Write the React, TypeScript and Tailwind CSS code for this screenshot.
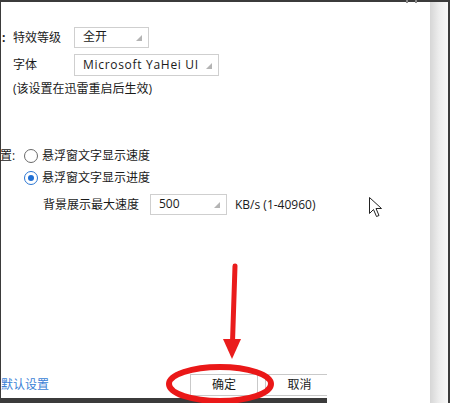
import React from "react";

const font = { fontFamily: '"Open Sans", "Noto Sans CJK SC", sans-serif' };

function Tri() {
  return (
    <svg width="6" height="6" viewBox="0 0 6 6" className="shrink-0">
      <polygon points="6,0 6,6 0,6" fill="#b4b4b4" />
    </svg>
  );
}

function Select({ value, w, h, wide }: { value: string; w: string; h: string; wide?: boolean }) {
  return (
    <div
      className={`${w} ${h} border border-[#cfcfcf] bg-white flex items-center justify-between pl-[8px] pr-[6px] pb-[1px]`}
    >
      <span className={wide ? "leading-[16px] text-[12px] text-[#1a1a1a] tracking-[0.7px]" : "leading-[16px] text-[12px] text-[#1a1a1a]"}>{value}</span>
      <div className="self-end mb-[5px]">
        <Tri />
      </div>
    </div>
  );
}

function Radio({ checked }: { checked?: boolean }) {
  return checked ? (
    <div className="w-[14px] h-[14px] rounded-full border border-[#2b76d2] bg-white flex items-center justify-center shrink-0">
      <div className="w-[6px] h-[6px] rounded-full bg-[#1f6fd4]" />
    </div>
  ) : (
    <div className="w-[14px] h-[14px] rounded-full border border-[#6a6a6a] bg-white shrink-0" />
  );
}

export default function App() {
  return (
    <div
      className="relative w-[450px] h-[403px] bg-[#3b3b3b] pt-[2px] flex overflow-hidden text-[12px] text-[#1a1a1a]"
      style={font}
    >
      <div className="w-[1px] shrink-0" />
      {/* main white panel */}
      <div className="w-[429px] h-[401px] bg-white flex flex-col">
        {/* row 1 */}
        <div className="mt-[25px] flex items-center h-[21px]">
          <span className="w-[12px] pl-[1px] font-bold leading-[16px]">:</span>
          <span className="w-[61px] leading-[16px]">特效等级</span>
          <Select value="全开" w="w-[75px]" h="h-[21px]" />
        </div>
        {/* row 2 */}
        <div className="mt-[6px] flex items-center h-[22px] pl-[12px]">
          <span className="w-[61px] leading-[16px]">字体</span>
          <Select value="Microsoft YaHei UI" w="w-[145px]" h="h-[22px]" wide />
        </div>
        {/* row 3 */}
        <div className="mt-[5px] pl-[12px] leading-[16px]">(该设置在迅雷重启后生效)</div>
        {/* radio 1 */}
        <div className="mt-[51px] flex items-center h-[16px]">
          <span className="w-[24px] -ml-[1px] leading-[16px]">置:</span>
          <Radio />
          <span className="ml-[4px] leading-[16px]">悬浮窗文字显示速度</span>
        </div>
        {/* radio 2 */}
        <div className="mt-[6px] flex items-center h-[16px] pl-[23px]">
          <Radio checked />
          <span className="ml-[4px] leading-[16px]">悬浮窗文字显示进度</span>
        </div>
        {/* speed */}
        <div className="mt-[8px] flex items-center h-[21px] pl-[42px]">
          <span className="w-[107px] leading-[16px]">背景展示最大速度</span>
          <Select value="500" w="w-[77px]" h="h-[21px]" />
          <span className="ml-[8px] leading-[16px]">KB/s (1-40960)</span>
        </div>
        <div className="flex-1" />
        {/* footer */}
        <div className="flex items-center h-[22px]">
          <span className="w-[189px] text-[#3a7fd6] leading-[16px]">默认设置</span>
          <div className="flex h-[22px] border-y border-[#c9c9c9]">
            <div className="w-[68px] border-x border-[#c9c9c9] flex items-center justify-center leading-[16px]">
              确定
            </div>
            <div className="w-[7px]" />
            <div className="w-[62px] border-l border-[#c9c9c9] flex items-center justify-center leading-[16px]">
              <span className="ml-[6px]">取消</span>
            </div>
          </div>
        </div>
        <div className="mt-[2px] flex">
          <div className="w-[326px] h-[5px] bg-[#3b3b3b]" />
        </div>
      </div>
      {/* right gradient strip */}
      <div className="w-[18px] h-[401px] bg-gradient-to-r from-[#d6d6d6] via-[#ededed] to-[#f8f8f8]" />

      {/* overlays */}
      <svg
        className="absolute inset-0 pointer-events-none"
        width="450"
        height="403"
        viewBox="0 0 450 403"
      >
        <rect x="406" y="0" width="2" height="3" fill="#8a8a8a" />
        <rect x="415" y="0" width="2" height="3" fill="#8a8a8a" />
        <line x1="235" y1="266" x2="232.5" y2="342" stroke="#ea1c1c" strokeWidth="5" strokeLinecap="round" />
        <polygon points="223,339 241,339 232,359" fill="#ea1c1c" />
        <ellipse cx="220" cy="384" rx="51" ry="17" fill="none" stroke="#ea1818" strokeWidth="6" />
        <path
          d="M369.5 197.5 L369.5 213.5 L373.5 209.5 L376.5 216.5 L379 215.5 L376 208.5 L381.5 208.5 Z"
          fill="#ffffff"
          stroke="#222"
          strokeWidth="1"
          strokeLinejoin="round"
        />
      </svg>
    </div>
  );
}
